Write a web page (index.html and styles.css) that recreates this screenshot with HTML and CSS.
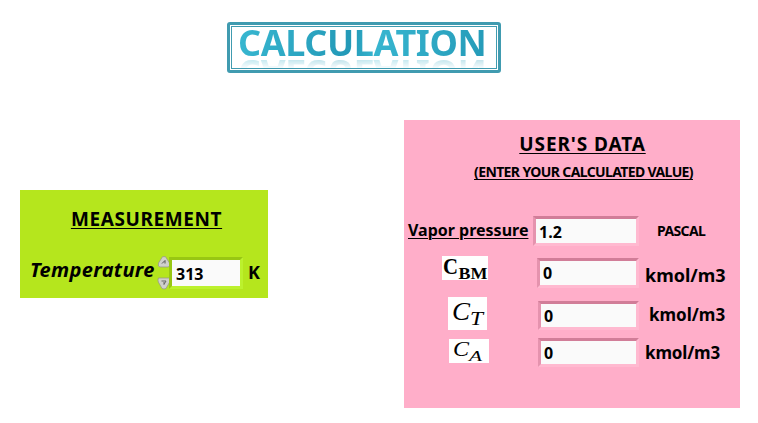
FILE: index.html
```html
<!DOCTYPE html>
<html lang="en">
<head>
<meta charset="utf-8">
<title>Calculation</title>
<link rel="stylesheet" href="styles.css">
</head>
<body>
<header class="banner"><div class="banner-frame"><h1>CALCULATION</h1></div></header>
<main class="panels">
  <section class="panel measurement">
    <h2>MEASUREMENT</h2>
    <div class="temp-row">
      <label class="temp-label">Temperature</label>
      <svg class="spinner" width="14" height="34" viewBox="0 0 14 34">
        <path d="M5.500 .7h3L12.500 7q1 4-1.500 4H3Q.5 11 1.500 7Z" fill="#d0d0cc" stroke="#999b85" stroke-width=".8"/>
        <path d="M1.500 22h11q1 2 .2 4L9 32.500q-2 1-4 0L1.300 26q-.8-2 .2-4Z" fill="#d0d0cc" stroke="#999b85" stroke-width=".8"/>
        <path d="M5 7.500L8 4.500v3" fill="none" stroke="#555"/>
        <path d="M4.500 25h4.500L7 28.500V26" fill="none" stroke="#666"/>
      </svg>
      <div class="field green">313</div>
      <span class="kelvin">K</span>
    </div>
  </section>
  <section class="panel user-data">
    <h2>USER'S DATA</h2>
    <p class="hint">(ENTER YOUR CALCULATED VALUE)</p>
    <div class="row pressure">
      <span class="name vapor">Vapor pressure</span>
      <div class="field pink">1.2</div>
      <span class="unit pascal">PASCAL</span>
    </div>
    <div class="row bm">
      <span class="name"><svg class="symbol" width="46" height="24"><g font-weight="bold"><text x="1" y="17.500" font-size="23" textLength="15" lengthAdjust="spacingAndGlyphs">C</text><text x="16.500" y="22.500" font-size="17" textLength="29" lengthAdjust="spacingAndGlyphs">BM</text></g></svg></span>
      <div class="field pink">0</div>
      <span class="unit">kmol/m3</span>
    </div>
    <div class="row ct">
      <span class="name"><svg class="symbol" width="39" height="33"><g font-style="italic"><text x="4" y="22.500" font-size="26" textLength="18" lengthAdjust="spacingAndGlyphs">C</text><text x="22" y="28" font-size="18" textLength="13" lengthAdjust="spacingAndGlyphs">T</text></g></svg></span>
      <div class="field pink">0</div>
      <span class="unit">kmol/m3</span>
    </div>
    <div class="row ca">
      <span class="name"><svg class="symbol" width="40" height="24"><g font-style="italic"><text x="4" y="17" font-size="20" textLength="16" lengthAdjust="spacingAndGlyphs">C</text><text x="20" y="21.500" font-size="15" textLength="13" lengthAdjust="spacingAndGlyphs">A</text></g></svg></span>
      <div class="field pink">0</div>
      <span class="unit">kmol/m3</span>
    </div>
  </section>
</main>
</body>
</html>
```
FILE: styles.css
```css
* { box-sizing: border-box; }
body { margin: 0; background: #fff; color: #000; font-family: "Noto Sans", "Open Sans", sans-serif; font-weight: 700; height: 423px; overflow: hidden; }
h1, h2, p { margin: 0; white-space: nowrap; }

.banner { height: 120px; padding: 22px 0 0 227px; }
.banner-frame { width: 274px; height: 51px; border: 3px solid #409bb0; border-radius: 3px; padding: 1px; outline: 1px solid #409bb0; outline-offset: -5px; }
.banner h1 {
  width: 266px; height: 29px; margin-top: 2px; padding-left: 7px;
  font-size: 36px; line-height: 29px; font-weight: 700; letter-spacing: -.4px;
  background: linear-gradient(100deg, #39b9d2, #2399b7 45%, #37b5cf 55%, #2398b6);
  -webkit-background-clip: text; background-clip: text; -webkit-text-fill-color: transparent;
  -webkit-box-reflect: below 2px linear-gradient(transparent 65%, rgba(0,0,0,.3));
}

.panels { display: flex; align-items: flex-start; }
.panel h2 { font-size: 19px; line-height: 24px; text-align: center; text-decoration: underline; text-decoration-thickness: 1px; text-underline-offset: 2px; }
.measurement { width: 248px; height: 108px; margin: 70px 0 0 20px; padding-top: 17px; background: #b5e61d; }
.measurement h2 { padding-left: 5px; letter-spacing: .6px; }
.temp-row { display: flex; height: 40px; margin-top: 25px; }
.temp-label { width: 137px; padding-left: 10px; font-size: 20px; line-height: 28px; letter-spacing: .35px; font-style: italic; white-space: nowrap; }
.spinner { flex: none; }
.kelvin { margin-left: 5px; font-size: 18px; line-height: 32px; }

.field { background: #fafafa; border: 3px solid; font-size: 16px; white-space: nowrap; flex: none; }
.green { width: 74px; height: 32px; margin-left: -2px; margin-top: 1px; padding-left: 4px; line-height: 28px; border-color: #98c713 #bcf12d #bcf12d #98c713; }
.pink { width: 102px; height: 30px; padding-left: 3px; border-color: #d17d98 #ffb9d0 #ffb9d0 #e593ae; }

.user-data { width: 336px; height: 288px; margin-left: 136px; padding-top: 12px; background: #ffaec9; }
.user-data h2 { padding-left: 21px; letter-spacing: .9px; }
.hint { margin-top: 6px; padding-left: 23px; font-size: 14px; line-height: 20px; letter-spacing: -.62px; text-align: center; text-decoration: underline; text-underline-offset: 2px; text-decoration-thickness: 1px; }
.row { display: flex; height: 30px; }
.name { flex: none; width: 133px; }
.unit { margin-left: 6px; font-size: 18px; line-height: 34px; white-space: nowrap; }
.symbol { display: block; overflow: visible; background: #fff; font-family: "Liberation Serif", serif; font-weight: 400; }
.pressure { margin-top: 34px; }
.pressure .name { width: 129px; padding-left: 4px; font-size: 16px; line-height: 28px; text-decoration: underline; text-decoration-thickness: 1px; text-underline-offset: 2px; white-space: nowrap; }
.pressure .field { width: 106px; line-height: 26px; }
.pascal { margin-left: 18px; font-size: 14px; line-height: 29px; letter-spacing: -.6px; }
.bm { margin-top: 12px; }
.bm .name { padding-left: 38px; margin-top: -2px; }
.bm .field { line-height: 25px; }
.ct { margin-top: 12px; }
.ct .name, .ca .name { width: 134px; }
.ct .name { padding-left: 44px; margin-top: -3px; }
.ct .field, .ca .field { width: 101px; height: 29px; line-height: 24px; }
.ct .field { margin-top: 1px; }
.ct .unit { margin-left: 10px; font-size: 17px; line-height: 29px; }
.ca { margin-top: 8px; }
.ca .name { padding-left: 45px; margin-top: 1px; }
.ca .unit { margin-left: 6px; font-size: 17px; line-height: 30px; letter-spacing: -.15px; }
```
